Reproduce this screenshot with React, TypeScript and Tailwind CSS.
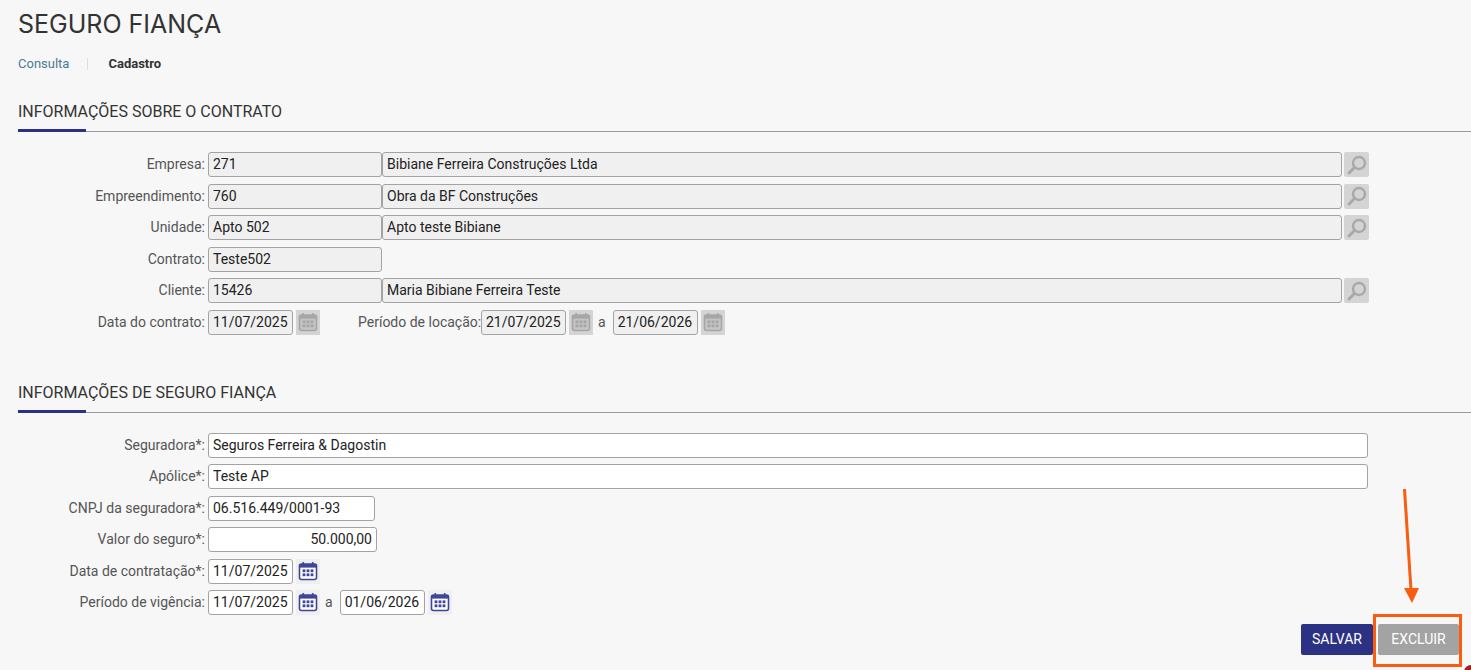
import { Fragment, type ReactNode } from 'react';

const inputBase =
  'h-[25px] rounded-[3px] border border-[#a3a3a3] px-[4px] text-[14px] leading-[23px] text-[#222] whitespace-nowrap overflow-hidden';

function Field({ value, width, disabled, right }: { value: string; width: string; disabled?: boolean; right?: boolean }) {
  return (
    <div className={`${inputBase} ${width} ${disabled ? 'bg-[#f0f0f0]' : 'bg-white'} ${right ? 'text-right' : ''}`}>
      {value}
    </div>
  );
}

function SearchButton() {
  return (
    <div className="ml-[2px] flex h-[25px] w-[25px] items-center justify-center rounded-[2px] bg-[#d4d4d4]">
      <svg width="22" height="22" viewBox="0 0 22 22" fill="none" stroke="#a8a8a8">
        <circle cx="13" cy="9" r="6" strokeWidth="2.4" />
        <path d="M8.5 13.5L3 19" strokeWidth="3" strokeLinecap="round" />
      </svg>
    </div>
  );
}

function CalendarButton({ active }: { active?: boolean }) {
  const color = active ? '#3f4598' : '#a6a6a6';
  return (
    <div className={`ml-[3px] flex h-[25px] w-[24px] items-center justify-center ${active ? 'bg-[#efefef]' : 'bg-[#d4d4d4]'}`}>
      <svg width="20" height="20" viewBox="0 0 20 20">
        <rect x="1.5" y="3" width="17" height="15.5" rx="2" fill={active ? '#fff' : '#c4c4c4'} stroke={color} strokeWidth="1.6" />
        <rect x="1.5" y="3" width="17" height="3.6" fill={color} />
        <rect x="4.5" y="1" width="1.6" height="3" fill={color} />
        <rect x="13.9" y="1" width="1.6" height="3" fill={color} />
        {[4.6, 8.6, 12.6].map((x) =>
          [8.4, 12.4].map((y) => <rect key={`${x}-${y}`} x={x} y={y} width="2.8" height="2.8" fill={color} />)
        )}
      </svg>
    </div>
  );
}

function Row({ label, children, className = '' }: { label: string; children: ReactNode; className?: string }) {
  return (
    <div className={`flex items-center h-[25px] ${className}`}>
      <div className="w-[187px] text-right text-[14px] text-[#555] whitespace-nowrap">{label}</div>
      <div className="ml-[3px] flex items-center">{children}</div>
    </div>
  );
}

function SectionTitle({ title }: { title: string }) {
  return (
    <div className="relative mr-[0px] h-[30px] border-b border-[#9a9a9a]">
      <div className="text-[16px] leading-[20px] text-[#333] font-normal">{title}</div>
      <div className="absolute left-0 top-[27px] h-[3px] w-[68px] bg-[#2b3183]" />
    </div>
  );
}

function DateRange({ from, to, active }: { from: string; to: string; active?: boolean }) {
  return (
    <Fragment>
      <Field value={from} width="w-[85px]" disabled={!active} />
      <CalendarButton active={active} />
      <span className="ml-[5px] mr-[7px] text-[14px] text-[#555]">a</span>
      <Field value={to} width="w-[85px]" disabled={!active} />
      <CalendarButton active={active} />
    </Fragment>
  );
}

export default function App() {
  return (
    <div className="relative h-[670px] w-[1471px] overflow-hidden bg-[#f7f7f7] pl-[18px] font-['Roboto',sans-serif]">
      <h1 className="pt-[9px] font-['Inter',sans-serif] text-[25px] leading-[30px] font-normal text-[#333]">SEGURO FIANÇA</h1>

      {/* Tabs */}
      <div className="mt-[17px] flex h-[16px] items-center text-[13px] leading-[16px]">
        <span className="text-[#4c7a96]">Consulta</span>
        <span className="mx-[18px] h-[12px] w-px bg-[#ddd]" />
        <span className="ml-[2px] font-bold text-[#333]">Cadastro</span>
      </div>

      <div className="mt-[30px]">
        <SectionTitle title="INFORMAÇÕES SOBRE O CONTRATO" />
      </div>

      {/* Contrato */}
      <div className="mt-[20px] flex flex-col gap-[6.6px]">
        <Row label="Empresa:">
          <Field value="271" width="w-[174px]" disabled />
          <Field value="Bibiane Ferreira Construções Ltda" width="w-[960px]" disabled />
          <SearchButton />
        </Row>
        <Row label="Empreendimento:">
          <Field value="760" width="w-[174px]" disabled />
          <Field value="Obra da BF Construções" width="w-[960px]" disabled />
          <SearchButton />
        </Row>
        <Row label="Unidade:">
          <Field value="Apto 502" width="w-[174px]" disabled />
          <Field value="Apto teste Bibiane" width="w-[960px]" disabled />
          <SearchButton />
        </Row>
        <Row label="Contrato:">
          <Field value="Teste502" width="w-[174px]" disabled />
        </Row>
        <Row label="Cliente:">
          <Field value="15426" width="w-[174px]" disabled />
          <Field value="Maria Bibiane Ferreira Teste" width="w-[960px]" disabled />
          <SearchButton />
        </Row>
        <Row label="Data do contrato:">
          <Field value="11/07/2025" width="w-[85px]" disabled />
          <CalendarButton />
          <span className="ml-[38px] mr-[4px] w-[119px] text-right text-[14px] text-[#555] whitespace-nowrap">Período de locação:</span>
          <DateRange from="21/07/2025" to="21/06/2026" />
        </Row>
      </div>

      <div className="mt-[48px]">
        <SectionTitle title="INFORMAÇÕES DE SEGURO FIANÇA" />
      </div>

      {/* Seguro */}
      <div className="mt-[20px] flex flex-col gap-[6.4px]">
        <Row label="Seguradora*:">
          <Field value="Seguros Ferreira & Dagostin" width="w-[1160px]" />
        </Row>
        <Row label="Apólice*:">
          <Field value="Teste AP" width="w-[1160px]" />
        </Row>
        <Row label="CNPJ da seguradora*:">
          <Field value="06.516.449/0001-93" width="w-[167px]" />
        </Row>
        <Row label="Valor do seguro*:">
          <Field value="50.000,00" width="w-[169px]" right />
        </Row>
        <Row label="Data de contratação*:">
          <Field value="11/07/2025" width="w-[85px]" />
          <CalendarButton active />
        </Row>
        <Row label="Período de vigência:">
          <DateRange from="11/07/2025" to="01/06/2026" active />
        </Row>
      </div>

      {/* Acoes */}
      <div className="absolute left-[1301px] top-[624px] flex gap-[5px]">
        <button className="h-[31px] w-[72px] rounded-[2px] bg-[#2b3183] text-[14px] text-white">SALVAR</button>
        <button className="h-[31px] w-[81px] rounded-[2px] bg-[#a3a3a3] text-[14px] text-white">EXCLUIR</button>
      </div>

      {/* Marcacao do print */}
      <div className="absolute left-[1373px] top-[614px] h-[53px] w-[89px] border-[3px] border-[#f95d0f]" />
      <svg className="absolute left-[1395px] top-[485px]" width="30" height="125" viewBox="0 0 30 125">
        <path d="M9.5 4L16 105" stroke="#f95d0f" strokeWidth="3" fill="none" />
        <path d="M9 103H24L17 118Z" fill="#f95d0f" />
      </svg>
      <div className="absolute left-[1464px] top-[665px] h-[14px] w-[14px] rounded-full bg-[#b01c1c]" />
    </div>
  );
}
